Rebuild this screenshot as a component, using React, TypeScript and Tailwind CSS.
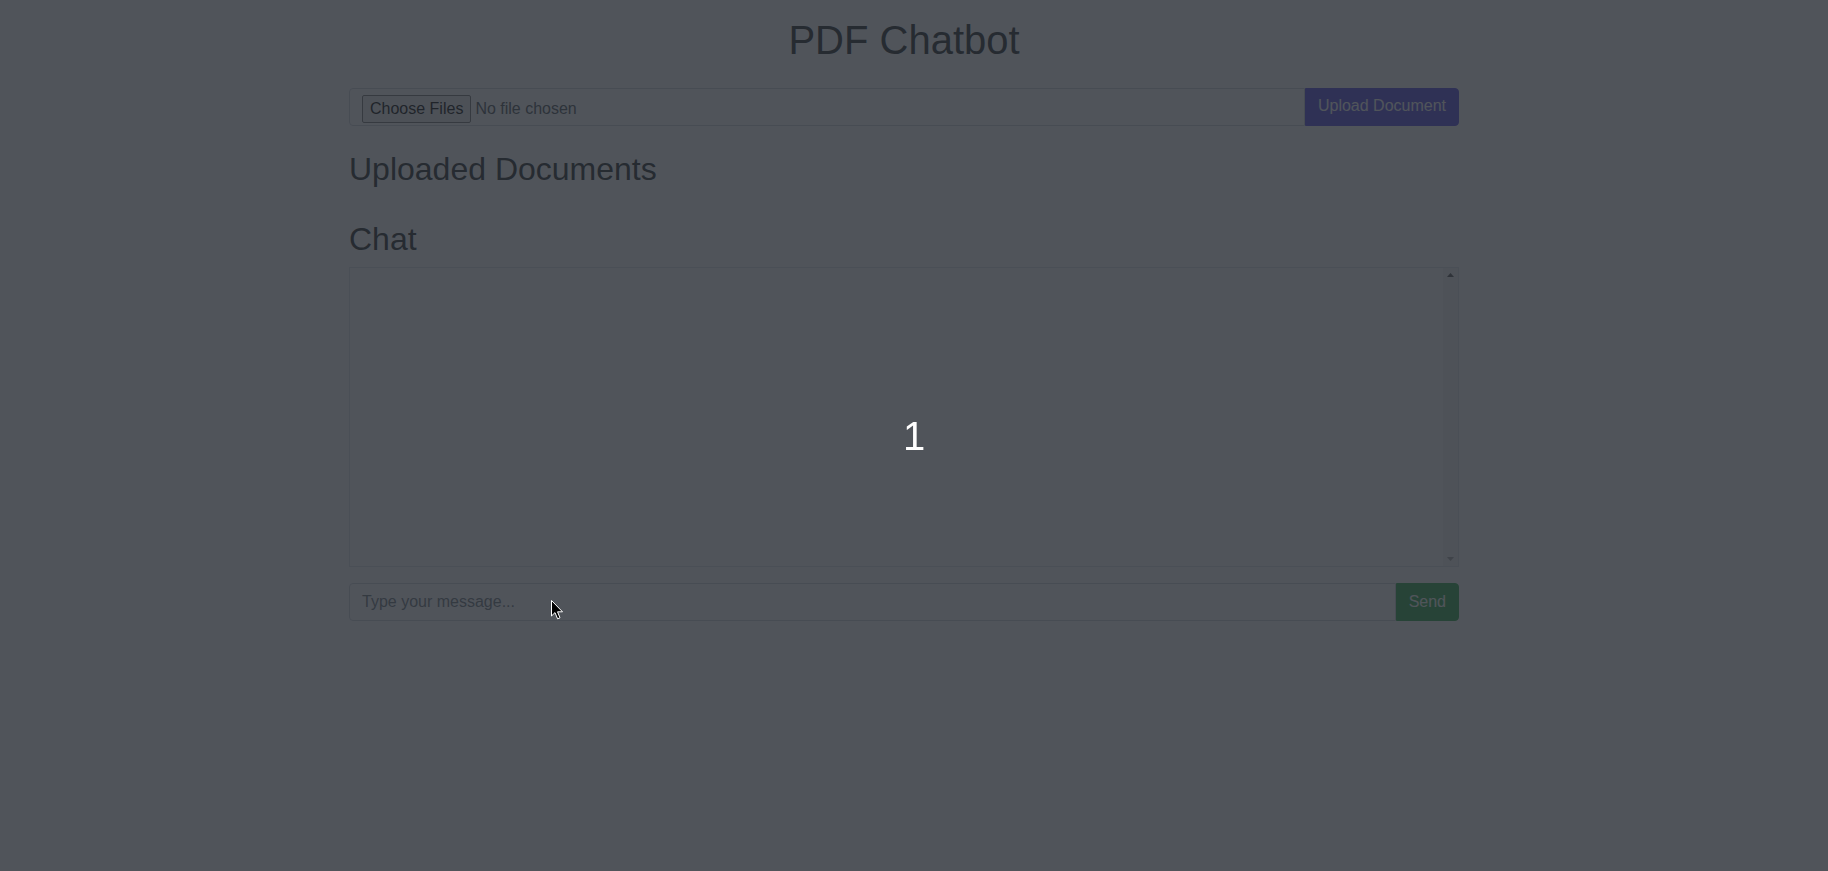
import React from "react";

// Dimmed page behind a countdown overlay
const App: React.FC = () => {
    return (
        <div className="relative min-h-screen bg-white font-['Liberation_Sans',Arial,sans-serif] text-[#212529]">
            <div className="pr-[20px] pt-4">
                <div className="mx-auto flex w-[1140px] flex-col px-[15px]">
                    <h1 className="mb-6 text-center text-[40px] leading-[48px] font-normal">PDF Chatbot</h1>

                    <div className="flex h-[38px]">
                        <div className="flex flex-1 items-start rounded-l-[4px] border border-[#ced4da] pt-[6px] pl-[12px] text-[16px]">
                            <span className="mr-[4px] flex h-[28px] items-center rounded-[2px] border border-[#767676] bg-[#efefef] px-[7px] text-[16px] text-black">
                                Choose Files
                            </span>
                            <span className="flex h-[28px] items-center text-[#495057]">No file chosen</span>
                        </div>
                        <button className="rounded-r-[4px] border border-[#4f46e5] bg-[#4f46e5] px-[12px] pb-[2px] text-[16px] text-white">
                            Upload Document
                        </button>
                    </div>

                    <h2 className="mt-6 mb-2 text-[32px] leading-[38.4px] font-normal">Uploaded Documents</h2>
                    <ul className="mb-6"></ul>

                    <h2 className="mb-2 text-[32px] leading-[38.4px] font-normal">Chat</h2>
                    <div className="flex h-[300px] border border-[#dee2e6]">
                        <div className="flex-1 p-[10px]"></div>
                        <div className="flex w-[15px] flex-col items-center justify-between bg-[#f1f1f1] py-[5px]">
                            <svg width="7" height="4" viewBox="0 0 7 4">
                                <path d="M0 4 L3.5 0 L7 4 Z" fill="#505050" />
                            </svg>
                            <svg width="7" height="4" viewBox="0 0 7 4">
                                <path d="M0 0 L3.5 4 L7 0 Z" fill="#a3a3a3" />
                            </svg>
                        </div>
                    </div>

                    <div className="mt-4 flex h-[38px]">
                        <input
                            type="text"
                            placeholder="Type your message..."
                            className="flex-1 rounded-l-[4px] border border-[#ced4da] px-[12px] text-[16px] text-[#495057] outline-none placeholder:text-[#6c757d]"
                        />
                        <button className="rounded-r-[4px] border border-[#28a745] bg-[#28a745] px-[12px] text-[16px] text-white">
                            Send
                        </button>
                    </div>
                </div>
            </div>

            {/* backdrop + countdown */}
            <div className="fixed inset-0 bg-[rgba(40,44,52,0.81)]"></div>
            <div className="fixed inset-0 flex items-center justify-center">
                <span className="text-[40px] leading-none text-white">1</span>
            </div>

            {/* mouse pointer */}
            <svg className="absolute left-[551px] top-[600px]" width="13" height="20" viewBox="0 0 13 20">
                <path d="M0.5 0.5 L0.5 16 L4 12.6 L6.6 18.8 L9 17.8 L6.5 11.8 L11.5 11.8 Z" fill="#000" stroke="#fff" strokeWidth="1" />
            </svg>
        </div>
    );
};

export default App;
